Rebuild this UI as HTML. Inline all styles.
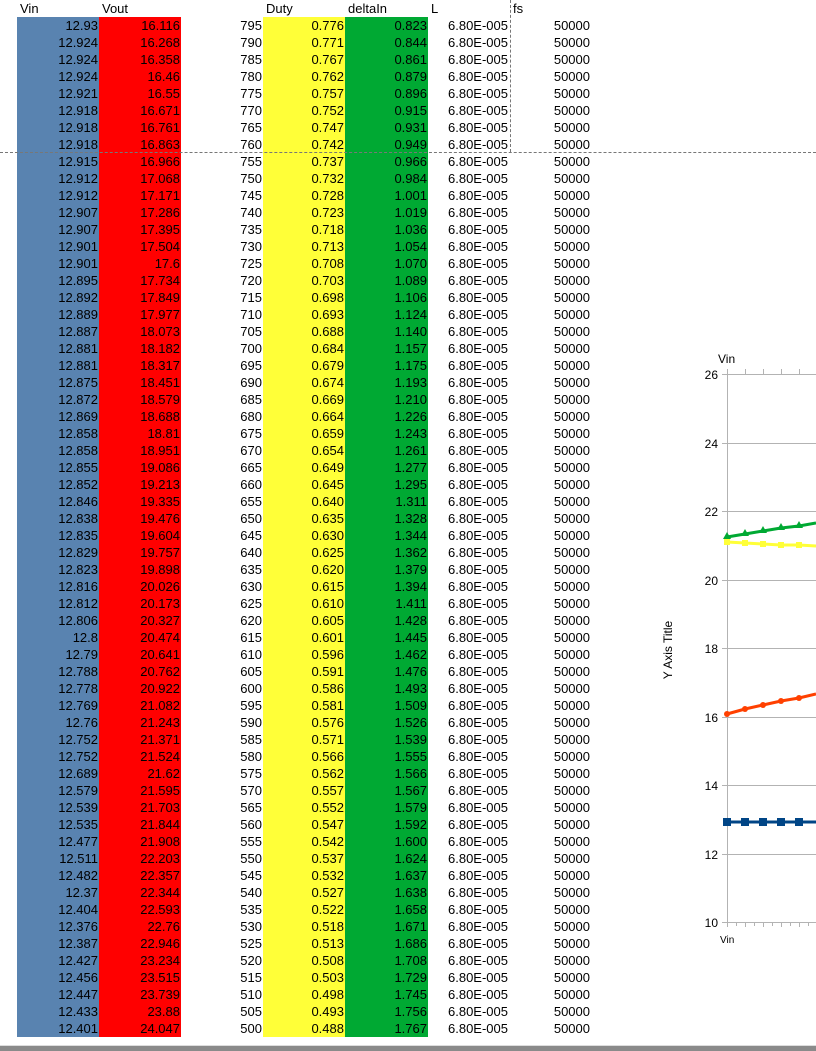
<!DOCTYPE html>
<html><head><meta charset="utf-8"><style>
body{margin:0;width:816px;height:1050px;overflow:hidden;background:#fff;position:relative;font-family:"Liberation Sans",sans-serif;font-size:13px;color:#000}
table{position:absolute;left:17px;top:0;border-collapse:collapse;table-layout:fixed;width:575px}
td{height:17px;padding:0 1px 0 0;text-align:right;white-space:nowrap;overflow:hidden;line-height:17px;box-sizing:border-box}
tr.h td{text-align:left;padding-left:3px}
tr:not(.h) td:nth-child(1){background:#5983b0}
tr:not(.h) td:nth-child(2){background:#ff0000}
tr:not(.h) td:nth-child(4){background:#ffff38}
tr:not(.h) td:nth-child(5){background:#00a933}
tr:not(.h) td:nth-child(6){padding-right:2px}
tr:not(.h) td:nth-child(7){padding-right:2px}
.hd{position:absolute;left:0;top:152px;width:816px;border-top:1px dashed #777}
.vd{position:absolute;left:510px;top:0;height:152px;border-left:1px dashed #777}
.bb{position:absolute;left:0;top:1045px;width:816px;height:5px;background:#8a8a8a;border-top:1px solid #ddd}
svg{position:absolute;left:0;top:0}
</style></head><body>
<table>
<colgroup><col style="width:82px"><col style="width:82px"><col style="width:82px"><col style="width:82px"><col style="width:83px"><col style="width:82px"><col style="width:82px"></colgroup>
<tr class="h"><td>Vin<td>Vout<td><td>Duty<td>deltaIn<td>L<td>fs
<tr><td>12.93<td>16.116<td>795<td>0.776<td>0.823<td>6.80E-005<td>50000
<tr><td>12.924<td>16.268<td>790<td>0.771<td>0.844<td>6.80E-005<td>50000
<tr><td>12.924<td>16.358<td>785<td>0.767<td>0.861<td>6.80E-005<td>50000
<tr><td>12.924<td>16.46<td>780<td>0.762<td>0.879<td>6.80E-005<td>50000
<tr><td>12.921<td>16.55<td>775<td>0.757<td>0.896<td>6.80E-005<td>50000
<tr><td>12.918<td>16.671<td>770<td>0.752<td>0.915<td>6.80E-005<td>50000
<tr><td>12.918<td>16.761<td>765<td>0.747<td>0.931<td>6.80E-005<td>50000
<tr><td>12.918<td>16.863<td>760<td>0.742<td>0.949<td>6.80E-005<td>50000
<tr><td>12.915<td>16.966<td>755<td>0.737<td>0.966<td>6.80E-005<td>50000
<tr><td>12.912<td>17.068<td>750<td>0.732<td>0.984<td>6.80E-005<td>50000
<tr><td>12.912<td>17.171<td>745<td>0.728<td>1.001<td>6.80E-005<td>50000
<tr><td>12.907<td>17.286<td>740<td>0.723<td>1.019<td>6.80E-005<td>50000
<tr><td>12.907<td>17.395<td>735<td>0.718<td>1.036<td>6.80E-005<td>50000
<tr><td>12.901<td>17.504<td>730<td>0.713<td>1.054<td>6.80E-005<td>50000
<tr><td>12.901<td>17.6<td>725<td>0.708<td>1.070<td>6.80E-005<td>50000
<tr><td>12.895<td>17.734<td>720<td>0.703<td>1.089<td>6.80E-005<td>50000
<tr><td>12.892<td>17.849<td>715<td>0.698<td>1.106<td>6.80E-005<td>50000
<tr><td>12.889<td>17.977<td>710<td>0.693<td>1.124<td>6.80E-005<td>50000
<tr><td>12.887<td>18.073<td>705<td>0.688<td>1.140<td>6.80E-005<td>50000
<tr><td>12.881<td>18.182<td>700<td>0.684<td>1.157<td>6.80E-005<td>50000
<tr><td>12.881<td>18.317<td>695<td>0.679<td>1.175<td>6.80E-005<td>50000
<tr><td>12.875<td>18.451<td>690<td>0.674<td>1.193<td>6.80E-005<td>50000
<tr><td>12.872<td>18.579<td>685<td>0.669<td>1.210<td>6.80E-005<td>50000
<tr><td>12.869<td>18.688<td>680<td>0.664<td>1.226<td>6.80E-005<td>50000
<tr><td>12.858<td>18.81<td>675<td>0.659<td>1.243<td>6.80E-005<td>50000
<tr><td>12.858<td>18.951<td>670<td>0.654<td>1.261<td>6.80E-005<td>50000
<tr><td>12.855<td>19.086<td>665<td>0.649<td>1.277<td>6.80E-005<td>50000
<tr><td>12.852<td>19.213<td>660<td>0.645<td>1.295<td>6.80E-005<td>50000
<tr><td>12.846<td>19.335<td>655<td>0.640<td>1.311<td>6.80E-005<td>50000
<tr><td>12.838<td>19.476<td>650<td>0.635<td>1.328<td>6.80E-005<td>50000
<tr><td>12.835<td>19.604<td>645<td>0.630<td>1.344<td>6.80E-005<td>50000
<tr><td>12.829<td>19.757<td>640<td>0.625<td>1.362<td>6.80E-005<td>50000
<tr><td>12.823<td>19.898<td>635<td>0.620<td>1.379<td>6.80E-005<td>50000
<tr><td>12.816<td>20.026<td>630<td>0.615<td>1.394<td>6.80E-005<td>50000
<tr><td>12.812<td>20.173<td>625<td>0.610<td>1.411<td>6.80E-005<td>50000
<tr><td>12.806<td>20.327<td>620<td>0.605<td>1.428<td>6.80E-005<td>50000
<tr><td>12.8<td>20.474<td>615<td>0.601<td>1.445<td>6.80E-005<td>50000
<tr><td>12.79<td>20.641<td>610<td>0.596<td>1.462<td>6.80E-005<td>50000
<tr><td>12.788<td>20.762<td>605<td>0.591<td>1.476<td>6.80E-005<td>50000
<tr><td>12.778<td>20.922<td>600<td>0.586<td>1.493<td>6.80E-005<td>50000
<tr><td>12.769<td>21.082<td>595<td>0.581<td>1.509<td>6.80E-005<td>50000
<tr><td>12.76<td>21.243<td>590<td>0.576<td>1.526<td>6.80E-005<td>50000
<tr><td>12.752<td>21.371<td>585<td>0.571<td>1.539<td>6.80E-005<td>50000
<tr><td>12.752<td>21.524<td>580<td>0.566<td>1.555<td>6.80E-005<td>50000
<tr><td>12.689<td>21.62<td>575<td>0.562<td>1.566<td>6.80E-005<td>50000
<tr><td>12.579<td>21.595<td>570<td>0.557<td>1.567<td>6.80E-005<td>50000
<tr><td>12.539<td>21.703<td>565<td>0.552<td>1.579<td>6.80E-005<td>50000
<tr><td>12.535<td>21.844<td>560<td>0.547<td>1.592<td>6.80E-005<td>50000
<tr><td>12.477<td>21.908<td>555<td>0.542<td>1.600<td>6.80E-005<td>50000
<tr><td>12.511<td>22.203<td>550<td>0.537<td>1.624<td>6.80E-005<td>50000
<tr><td>12.482<td>22.357<td>545<td>0.532<td>1.637<td>6.80E-005<td>50000
<tr><td>12.37<td>22.344<td>540<td>0.527<td>1.638<td>6.80E-005<td>50000
<tr><td>12.404<td>22.593<td>535<td>0.522<td>1.658<td>6.80E-005<td>50000
<tr><td>12.376<td>22.76<td>530<td>0.518<td>1.671<td>6.80E-005<td>50000
<tr><td>12.387<td>22.946<td>525<td>0.513<td>1.686<td>6.80E-005<td>50000
<tr><td>12.427<td>23.234<td>520<td>0.508<td>1.708<td>6.80E-005<td>50000
<tr><td>12.456<td>23.515<td>515<td>0.503<td>1.729<td>6.80E-005<td>50000
<tr><td>12.447<td>23.739<td>510<td>0.498<td>1.745<td>6.80E-005<td>50000
<tr><td>12.433<td>23.88<td>505<td>0.493<td>1.756<td>6.80E-005<td>50000
<tr><td>12.401<td>24.047<td>500<td>0.488<td>1.767<td>6.80E-005<td>50000
</table>
<div class="hd"></div><div class="vd"></div>
<svg width="816" height="1050" font-family="Liberation Sans, sans-serif">
<g stroke="#b3b3b3" stroke-width="1">
<line x1="722" y1="374.5" x2="816" y2="374.5"/><line x1="722" y1="443.5" x2="816" y2="443.5"/>
<line x1="722" y1="511.5" x2="816" y2="511.5"/><line x1="722" y1="580.5" x2="816" y2="580.5"/>
<line x1="722" y1="648.5" x2="816" y2="648.5"/><line x1="722" y1="717.5" x2="816" y2="717.5"/>
<line x1="722" y1="785.5" x2="816" y2="785.5"/><line x1="722" y1="854.5" x2="816" y2="854.5"/>
<line x1="722" y1="922.5" x2="816" y2="922.5"/>
<line x1="727.5" y1="369" x2="727.5" y2="927"/>
<path d="M745.5 369v5M763.5 369v5M781.5 369v5M799.5 369v5M736.5 922v4M745.5 922v5M754.5 922v4M763.5 922v5M772.5 922v4M781.5 922v5M790.5 922v4M799.5 922v5M808.5 922v4"/>
</g>
<g font-size="12" text-anchor="end" fill="#000">
<text x="718" y="379">26</text><text x="718" y="448">24</text><text x="718" y="516">22</text>
<text x="718" y="585">20</text><text x="718" y="653">18</text><text x="718" y="722">16</text>
<text x="718" y="790">14</text><text x="718" y="859">12</text><text x="718" y="927">10</text>
</g>
<text x="718" y="363" font-size="12">Vin</text>
<text x="720" y="943" font-size="10">Vin</text>
<text x="672" y="650" font-size="12" text-anchor="middle" transform="rotate(-90 672 650)">Y Axis Title</text>
<polyline points="727,542 745,543 763,544 781,545 799,545 816,546" fill="none" stroke="#ffff38" stroke-width="3"/>
<g fill="#ffff38"><rect x="724" y="539" width="6" height="6"/><rect x="742" y="540" width="6" height="6"/><rect x="760" y="541" width="6" height="6"/><rect x="778" y="542" width="6" height="6"/><rect x="796" y="542" width="6" height="6"/></g>
<polyline points="727,537 745,534 763,531 781,528 799,526 816,523" fill="none" stroke="#00a933" stroke-width="3"/>
<g fill="#00a933"><path d="M727 532l4 7h-8z"/><path d="M745 529l4 7h-8z"/><path d="M763 526l4 7h-8z"/><path d="M781 523l4 7h-8z"/><path d="M799 521l4 7h-8z"/></g>
<polyline points="727,714 745,709 763,705 781,701 799,698 816,694" fill="none" stroke="#ff4000" stroke-width="3"/>
<g fill="#ff4000"><circle cx="727" cy="714" r="3"/><circle cx="745" cy="709" r="3"/><circle cx="763" cy="705" r="3"/><circle cx="781" cy="701" r="3"/><circle cx="799" cy="698" r="3"/></g>
<line x1="727" y1="822" x2="816" y2="822" stroke="#004586" stroke-width="3"/>
<g fill="#004586"><rect x="723" y="818" width="8" height="8"/><rect x="741" y="818" width="8" height="8"/><rect x="759" y="818" width="8" height="8"/><rect x="777" y="818" width="8" height="8"/><rect x="795" y="818" width="8" height="8"/></g>
</svg>
<div class="bb"></div>
</body></html>
